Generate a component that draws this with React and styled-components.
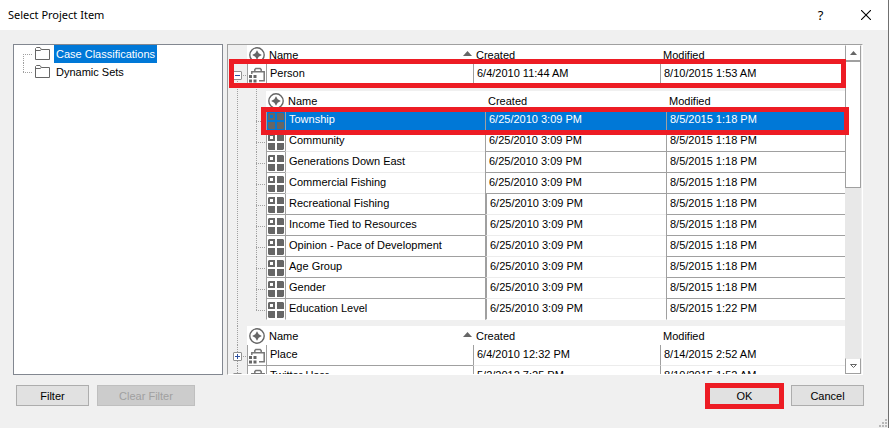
import React from "react";
import styled, { createGlobalStyle, css } from "styled-components";

const color = {
  face: "#f0f0f0",
  line: "#a0a0a0",
  soft: "#ececec",
  select: "#0078d7",
  mark: "#ed1c24",
  glyph: "#666666",
};

const Global = createGlobalStyle`
  *, *::before, *::after { box-sizing: border-box; }
  body {
    margin: 0;
    background: ${color.face};
    color: #000;
    font: 11px/17px "Liberation Sans", Arial, sans-serif;
  }
  button { font: inherit; color: inherit; }
`;

const Dialog = styled.main`
  position: relative;
  display: flex;
  flex-direction: column;
  height: 100vh;
  overflow: hidden;
  background: ${color.face};
  border-right: 1px solid #707070;
`;

const TitleBar = styled.header`
  display: flex;
  align-items: center;
  flex: none;
  height: 30px;
  padding-left: 8px;
  background: #fff;
`;

const Title = styled.h1`
  flex: 1;
  margin: 0;
  font: 11px/20px "Noto Sans", "Open Sans", sans-serif;
`;

const CaptionButton = styled.button`
  display: grid;
  place-items: center;
  width: 45px;
  height: 28px;
  padding: 0;
  border: 0;
  background: none;
  font: 13px/20px "Noto Sans", "Open Sans", sans-serif;
`;

const Panes = styled.div`
  display: flex;
  flex: 1;
  gap: 4px;
  min-height: 0;
  padding: 14px 25px 0 13px;
`;

const TreePane = styled.ul`
  flex: none;
  width: 210px;
  margin: 0;
  padding: 0 0 0 9px;
  list-style: none;
  background: #fff;
  border: 1px solid #828790;
`;

const dotsDown = `repeating-linear-gradient(to bottom, ${color.line} 0 1px, transparent 1px 2px)`;
const dotsAcross = `repeating-linear-gradient(to right, ${color.line} 0 1px, transparent 1px 2px)`;

const TreeItem = styled.li`
  position: relative;
  display: flex;
  align-items: center;
  height: 18px;
  padding-left: 12px;
  &::before {
    content: "";
    position: absolute;
    left: 0;
    top: ${(p) => (p.$last ? "0" : "50%")};
    bottom: ${(p) => (p.$last ? "50%" : "0")};
    width: 1px;
    background: ${dotsDown};
  }
  &::after {
    content: "";
    position: absolute;
    left: 0;
    top: 50%;
    width: 9px;
    height: 1px;
    background: ${dotsAcross};
  }
`;

const TreeLabel = styled.button`
  height: 18px;
  margin-left: 3px;
  padding: 0 2px;
  border: 0;
  line-height: 18px;
  background: ${(p) => (p.$selected ? color.select : "none")};
  color: ${(p) => (p.$selected ? "#fff" : "#000")};
`;

const GridPane = styled.section`
  display: flex;
  flex: 1;
  min-width: 0;
  overflow: hidden;
  border: 1px solid ${color.line};
  border-right-color: #fff;
  border-bottom-color: #fff;
`;

const GridView = styled.div`
  flex: 1;
  min-width: 0;
`;

const Table = styled.table`
  width: 100%;
  table-layout: fixed;
  border-collapse: separate;
  border-spacing: 0;
`;

const Col = styled.col`
  width: ${(p) => (p.$w ? `${p.$w}px` : "auto")};
`;

const Gutter = styled.td`
  position: relative;
  padding: 0;
  ${(p) =>
    p.$line &&
    css`
      &::before {
        content: "";
        position: absolute;
        left: 9px;
        top: ${p.$line === "start" ? "50%" : "0"};
        bottom: ${p.$line === "end" ? "50%" : "0"};
        width: 1px;
        background: ${dotsDown};
      }
    `}
  ${(p) =>
    p.$branch &&
    css`
      &::after {
        content: "";
        position: absolute;
        left: 9px;
        right: 1px;
        top: 50%;
        height: 1px;
        background: ${dotsAcross};
      }
    `}
`;

const Expander = styled.button`
  position: relative;
  z-index: 1;
  display: block;
  width: 9px;
  height: 9px;
  margin: 2px 0 0 5px;
  padding: 0;
  border: 1px solid #919191;
  border-radius: 1px;
  background: #fff;
  svg { display: block; }
`;

const HeadCell = styled.th`
  height: 19px;
  padding: 1px 1px 0 3px;
  background: #fff;
  font-weight: normal;
  text-align: left;
  white-space: nowrap;
`;

const HeadIcon = styled(HeadCell)`
  padding: 0 0 0 2px;
  svg { display: block; }
`;

const HeadLabel = styled.span`
  display: flex;
  justify-content: space-between;
  svg { margin-top: 4px; }
`;

const Row = styled.tr`
  position: relative;
  background: ${(p) => (p.$selected ? color.select : "#fff")};
  color: ${(p) => (p.$selected ? "#fff" : "#000")};
`;

const GutterRow = styled.tr`
  height: ${(p) => (p.$gap ? "6px" : "auto")};
`;

const Cell = styled.td`
  height: 21px;
  padding: 1px 0 0 3px;
  vertical-align: top;
  white-space: nowrap;
  overflow: hidden;
  border-left: ${(p) => (p.$heavy ? 2 : 1)}px solid ${color.line};
  border-bottom: 1px solid
    ${(p) => (p.$edge === "none" ? "transparent" : p.$edge === "soft" ? color.soft : color.line)};
`;

const IconCell = styled(Cell)`
  padding: 3px 0 0 1px;
  overflow: visible;
  svg { display: block; }
`;

const RowGutter = styled(Gutter)`
  background: ${color.face};
`;

const Nest = styled.td`
  padding: 0 0 6px;
`;

const RowMark = styled.span`
  position: absolute;
  z-index: 3;
  pointer-events: none;
  border: 5px solid ${color.mark};
  inset: ${(p) => (p.$level === 1 ? "-5px -1px -3px 1px" : "-3px -4px -4px 14px")};
`;

const ScrollBar = styled.div`
  display: flex;
  flex: none;
  flex-direction: column;
  width: 17px;
  background: #e8e8e8;
  border-right: 1px solid ${color.face};
`;

const ScrollButton = styled.button`
  display: grid;
  place-items: center;
  flex: none;
  height: 16px;
  padding: 0;
  background: #fff;
  border: 1px solid ${color.line};
  border-top-color: ${(p) => (p.$down ? "#e8e8e8" : "#fff")};
`;

const Thumb = styled.div`
  flex: 42;
  background: #fff;
  border: 1px solid ${color.line};
`;

const Track = styled.div`
  flex: 57;
`;

const Footer = styled.footer`
  display: flex;
  flex: none;
  justify-content: space-between;
  height: 53px;
  padding: 10px 24px 0 16px;
`;

const ButtonGroup = styled.div`
  display: flex;
  align-items: flex-start;
  gap: ${(p) => p.$gap}px;
`;

const PushButton = styled.button`
  position: relative;
  min-width: ${(p) => (p.$wide ? 98 : 73)}px;
  height: 21px;
  padding: 1px 8px 0;
  line-height: 18px;
  background: #e1e1e1;
  border: 1px solid #adadad;
  &:disabled {
    color: #a0a0a0;
    background: #cccccc;
    border-color: #bfbfbf;
  }
`;

const ButtonMark = styled.span`
  position: absolute;
  inset: -3px -4px -4px;
  border: 5px solid ${color.mark};
  pointer-events: none;
`;

const Grip = styled.svg`
  position: absolute;
  right: 1px;
  bottom: 1px;
`;

const FolderIcon = () => (
  <svg width="16" height="14" viewBox="0 0 16 14" fill="#fff" stroke={color.glyph} aria-hidden="true">
    <path d="M.5 12.5V1.5L1.5 .5H5L6.5 2.5H14.5V12.5Z" />
    <path d="M.5 3.5H5L6.5 2.5" fill="none" />
  </svg>
);

const StarIcon = () => (
  <svg width="16" height="16" viewBox="0 0 16 16" aria-hidden="true">
    <circle cx="8" cy="8" r="7.2" fill="#fff" stroke={color.glyph} strokeWidth="1.4" />
    <path d="M8 3.2L9.7 6.3L12.8 8L9.7 9.7L8 12.8L6.3 9.7L3.2 8L6.3 6.3Z" fill={color.glyph} />
  </svg>
);

const CaseIcon = () => (
  <svg width="16" height="16" viewBox="0 0 16 16" aria-hidden="true">
    <path
      d="M2.8 7V4.8H15.2V13.7H10M5.8 4.5V2.5L6.8 1.6H11.2L12.2 2.5V4.5"
      fill="none"
      stroke="#777"
      strokeWidth="1.5"
    />
    <path d="M0 8h3v3H0zM4.5 8h3v3h-3zM0 12.5h3v3H0zM4.5 12.5h3v3h-3z" fill={color.glyph} />
  </svg>
);

const AttributeIcon = () => (
  <svg width="16" height="16" viewBox="0 0 16 16" fill={color.glyph} aria-hidden="true">
    <path fillRule="evenodd" d="M1 0H7V7H0V1ZM2 2V5H5V2Z" />
    <path d="M9 0H15L16 1V7H9ZM0 9H7V16H1L0 15ZM9 9H16V15L15 16H9Z" />
  </svg>
);

const SortIcon = () => (
  <svg width="9" height="5" viewBox="0 0 9 5" aria-hidden="true">
    <path d="M4.5 0L9 5H0Z" fill={color.glyph} />
  </svg>
);

const ExpanderGlyph = ({ open }) => (
  <svg width="7" height="7" viewBox="0 0 7 7" stroke="#2b4fa0" aria-hidden="true">
    <path d={open ? "M1 3.5H6" : "M1 3.5H6M3.5 1V6"} />
  </svg>
);

function Columns({ widths }) {
  return (
    <colgroup>
      {widths.map((w, i) => (
        <Col key={i} $w={w} />
      ))}
    </colgroup>
  );
}

function HeadRow({ line, sorted }) {
  return (
    <tr>
      <Gutter $line={line} />
      <HeadIcon scope="col" aria-label="Type">
        <StarIcon />
      </HeadIcon>
      <HeadCell scope="col">
        <HeadLabel>
          Name
          {sorted && <SortIcon />}
        </HeadLabel>
      </HeadCell>
      <HeadCell scope="col">Created</HeadCell>
      <HeadCell scope="col">Modified</HeadCell>
    </tr>
  );
}

function CaseRow({ name, created, modified, open, marked, line = "full", edge }) {
  return (
    <Row>
      <RowGutter $line={line} $branch>
        <Expander type="button" aria-label={`${open ? "Collapse" : "Expand"} ${name}`}>
          <ExpanderGlyph open={open} />
        </Expander>
      </RowGutter>
      <IconCell>
        <CaseIcon />
        {marked && <RowMark $level={1} />}
      </IconCell>
      <Cell>{name}</Cell>
      <Cell $edge={edge}>{created}</Cell>
      <Cell $edge={edge}>{modified}</Cell>
    </Row>
  );
}

const attributes = [
  ["Township", "8/5/2015 1:18 PM"],
  ["Community", "8/5/2015 1:18 PM"],
  ["Generations Down East", "8/5/2015 1:18 PM"],
  ["Commercial Fishing", "8/5/2015 1:18 PM"],
  ["Recreational Fishing", "8/5/2015 1:18 PM"],
  ["Income Tied to Resources", "8/5/2015 1:18 PM"],
  ["Opinion - Pace of Development", "8/5/2015 1:18 PM"],
  ["Age Group", "8/5/2015 1:18 PM"],
  ["Gender", "8/5/2015 1:18 PM"],
  ["Education Level", "8/5/2015 1:22 PM"],
];

function AttributeTable() {
  const last = attributes.length - 1;
  return (
    <Table aria-label="Person attributes">
      <Columns widths={[19, 19, 200, 181, null]} />
      <tbody>
        <GutterRow $gap>
          <Gutter $line="full" />
        </GutterRow>
        <HeadRow line="full" />
        {attributes.map(([name, modified], i) => {
          const end = i === last ? "none" : undefined;
          return (
            <Row key={name} $selected={i === 0}>
              <RowGutter $line={i === last ? "end" : "full"} $branch />
              <IconCell $edge={end}>
                <AttributeIcon />
                {i === 0 && <RowMark $level={2} />}
              </IconCell>
              <Cell $edge={end || (i < 4 ? "soft" : "line")}>{name}</Cell>
              <Cell $edge={end || (i < 4 ? "line" : "soft")} $heavy={i >= 4}>
                6/25/2010 3:09 PM
              </Cell>
              <Cell $edge={end}>{modified}</Cell>
            </Row>
          );
        })}
      </tbody>
    </Table>
  );
}

export default function App() {
  return (
    <>
      <Global />
      <Dialog>
        <TitleBar>
          <Title>Select Project Item</Title>
          <CaptionButton type="button" aria-label="Help">?</CaptionButton>
          <CaptionButton type="button" aria-label="Close">
            <svg width="10" height="10" viewBox="0 0 10 10" stroke="#000" strokeWidth="1.1">
              <path d="M0 0L10 10M10 0L0 10" />
            </svg>
          </CaptionButton>
        </TitleBar>
        <Panes>
          <TreePane>
            <TreeItem>
              <FolderIcon />
              <TreeLabel type="button" $selected>Case Classifications</TreeLabel>
            </TreeItem>
            <TreeItem $last>
              <FolderIcon />
              <TreeLabel type="button">Dynamic Sets</TreeLabel>
            </TreeItem>
          </TreePane>
          <GridPane>
            <GridView>
              <Table aria-label="Case classifications">
                <Columns widths={[19, 19, 207, 187, null]} />
                <tbody>
                  <HeadRow sorted />
                  <CaseRow
                    name="Person"
                    created="6/4/2010 11:44 AM"
                    modified="8/10/2015 1:53 AM"
                    line="start"
                    open
                    marked
                  />
                  <tr>
                    <Gutter $line="full" />
                    <Nest colSpan={4}>
                      <AttributeTable />
                    </Nest>
                  </tr>
                  <HeadRow line="full" sorted />
                  <CaseRow
                    name="Place"
                    created="6/4/2010 12:32 PM"
                    modified="8/14/2015 2:52 AM"
                    edge="soft"
                  />
                  <CaseRow name="Twitter User" created="5/2/2012 7:25 PM" modified="8/10/2015 1:52 AM" />
                </tbody>
              </Table>
            </GridView>
            <ScrollBar>
              <ScrollButton type="button" aria-label="Scroll up">
                <svg width="7" height="4" viewBox="0 0 7 4" fill={color.glyph}>
                  <path d="M3.5 0L7 4H0Z" />
                </svg>
              </ScrollButton>
              <Thumb />
              <Track />
              <ScrollButton type="button" aria-label="Scroll down" $down>
                <svg width="7" height="4" viewBox="0 0 7 4" fill="none" stroke={color.glyph}>
                  <path d="M.5 .5H6.5L3.5 3.5Z" />
                </svg>
              </ScrollButton>
            </ScrollBar>
          </GridPane>
        </Panes>
        <Footer>
          <ButtonGroup $gap={8}>
            <PushButton type="button">Filter</PushButton>
            <PushButton type="button" $wide disabled>Clear Filter</PushButton>
          </ButtonGroup>
          <ButtonGroup $gap={10}>
            <PushButton type="button">
              OK
              <ButtonMark />
            </PushButton>
            <PushButton type="button">Cancel</PushButton>
          </ButtonGroup>
        </Footer>
        <Grip width="8" height="8" viewBox="0 0 8 8" fill="#b8b8b8" aria-hidden="true">
          <path d="M6 0h2v2H6zM3 3h2v2H3zM6 3h2v2H6zM0 6h2v2H0zM3 6h2v2H3zM6 6h2v2H6z" />
        </Grip>
      </Dialog>
    </>
  );
}
